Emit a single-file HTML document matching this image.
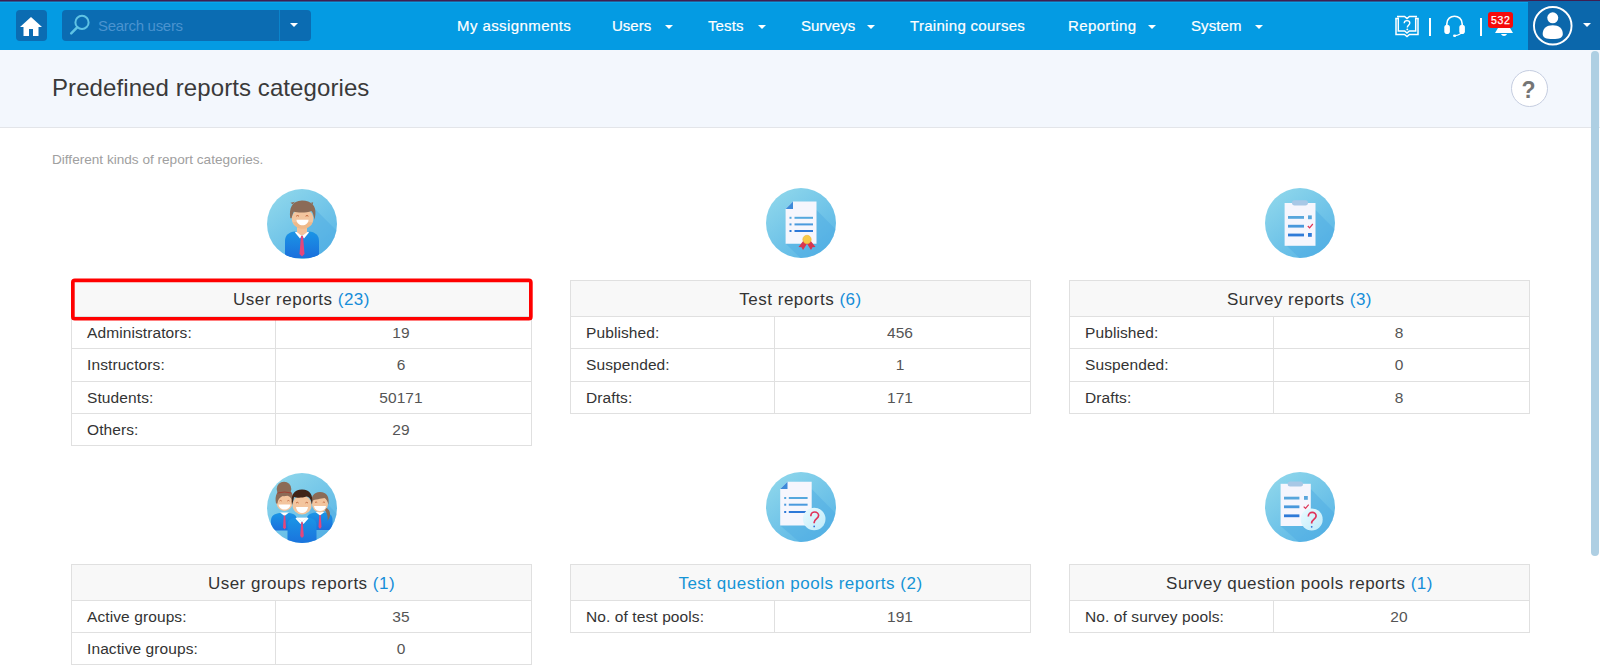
<!DOCTYPE html><html><head><meta charset="utf-8"><style>
*{box-sizing:border-box;margin:0;padding:0}
html,body{width:1600px;height:671px;overflow:hidden;background:#fff;font-family:"Liberation Sans",sans-serif;position:relative}
.a{position:absolute}
.nav{position:absolute;top:16px;color:#fff;font-size:15px;line-height:20px;white-space:nowrap;-webkit-text-stroke:0.2px currentColor}
.caret{position:absolute;top:25px;width:0;height:0;border-left:4px solid transparent;border-right:4px solid transparent;border-top:4px solid #fff}
.hl{position:absolute;height:1px;background:#e0e0e0}
.vl{position:absolute;width:1px;background:#e0e0e0}
.th{position:absolute;background:#f8f8f8;text-align:center;font-size:17px;color:#333;white-space:nowrap;letter-spacing:0.5px}
.th b{font-weight:normal;color:#158dd8}
.lb{position:absolute;font-size:15.5px;color:#333;white-space:nowrap;letter-spacing:0.1px}
.vv{position:absolute;font-size:15.5px;color:#555;white-space:nowrap;text-align:center;letter-spacing:0.1px}
</style></head><body>
<svg width="0" height="0" style="position:absolute"><defs>
<linearGradient id="gc" x1="0.15" y1="0.1" x2="0.8" y2="0.95">
<stop offset="0" stop-color="#8cd5eb"/><stop offset="1" stop-color="#5ab6e6"/></linearGradient>
<linearGradient id="gs" x1="0" y1="0" x2="1" y2="1">
<stop offset="0" stop-color="#4aa9e2"/><stop offset="1" stop-color="#5fb6e8" stop-opacity="0.6"/></linearGradient>
<linearGradient id="gb" x1="0" y1="0" x2="0" y2="1">
<stop offset="0" stop-color="#1b95e6"/><stop offset="1" stop-color="#1a6fdc"/></linearGradient>
<linearGradient id="gq" x1="0" y1="0" x2="1" y2="1">
<stop offset="0" stop-color="#e9fbff"/><stop offset="1" stop-color="#bfeaf9"/></linearGradient>
<clipPath id="cc"><circle cx="35" cy="35" r="35"/></clipPath>
</defs></svg>
<div class="a" style="left:0;top:0;width:1600px;height:50px;background:#049be3"></div>
<div class="a" style="left:0;top:0;width:1600px;height:1px;background:#3d1f52"></div>
<div class="a" style="left:0;top:1px;width:1600px;height:1px;background:#2b5c96"></div>
<div class="a" style="left:0;top:2px;width:1600px;height:1px;background:#06a6ee"></div>
<div class="a" style="left:16px;top:10px;width:31px;height:31px;background:#0b6cb2;border-radius:4px"></div>
<svg class="a" style="left:16px;top:10px" width="31" height="31" viewBox="0 0 31 31">
<path d="M15 7 L26 17 L22.5 17 L22.5 26 L17 26 L17 19 L13 19 L13 26 L7.5 26 L7.5 17 L4 17 Z" fill="#fff"/></svg>
<div class="a" style="left:62px;top:10px;width:249px;height:31px;background:#0b6cb2;border-radius:4px"></div>
<div class="a" style="left:279px;top:10px;width:1px;height:31px;background:#0a85cc"></div>
<svg class="a" style="left:62px;top:10px" width="30" height="31" viewBox="0 0 30 31">
<circle cx="20" cy="12.4" r="6.6" fill="none" stroke="#5fc3e4" stroke-width="2"/>
<line x1="15.2" y1="17.3" x2="9.2" y2="23.4" stroke="#5fc3e4" stroke-width="2.5" stroke-linecap="round"/></svg>
<div class="nav" style="left:98px;color:#4a93cf;letter-spacing:-0.3px;-webkit-text-stroke:0">Search users</div>
<div class="caret" style="left:290px;top:23px"></div>
<div class="nav" style="left:457px;letter-spacing:0.42px">My assignments</div>
<div class="nav" style="left:612px;letter-spacing:0px">Users</div>
<div class="caret" style="left:665px"></div>
<div class="nav" style="left:708px;letter-spacing:0.1px">Tests</div>
<div class="caret" style="left:758px"></div>
<div class="nav" style="left:801px;letter-spacing:0px">Surveys</div>
<div class="caret" style="left:867px"></div>
<div class="nav" style="left:910px;letter-spacing:0.3px">Training courses</div>
<div class="nav" style="left:1068px;letter-spacing:0.37px">Reporting</div>
<div class="caret" style="left:1148px"></div>
<div class="nav" style="left:1191px;letter-spacing:0.1px">System</div>
<div class="caret" style="left:1255px"></div>
<svg class="a" style="left:1380px;top:0" width="100" height="50" viewBox="1380 0 100 50">
<g fill="none" stroke="#fff" stroke-width="1.5" stroke-linejoin="miter">
<path d="M1398.3 17.5 L1398.3 31 L1404.7 31 L1407 33 L1409.3 31 L1415.7 31 L1415.7 17.5"/>
<path d="M1397 16.5 L1404.6 16.5 L1407 18.6 L1409.4 16.5 L1417 16.5"/>
<path d="M1396 18.5 L1396 34.5 L1404.5 34.5 L1407 36.6 L1409.5 34.5 L1418 34.5 L1418 18.5"/>
<path d="M1395.3 18.5 L1398.3 18.5 M1415.7 18.5 L1418.7 18.5"/>
</g>
<path d="M1404.2 23.3 C1404.2 21.3 1405.5 20.6 1407 20.6 C1408.6 20.6 1409.8 21.6 1409.8 23.1 C1409.8 25.2 1407.3 25.4 1407.3 27.5" fill="none" stroke="#fff" stroke-width="1.4"/>
<circle cx="1407.3" cy="29.4" r="0.95" fill="#fff"/>
<path d="M1446.8 26 L1446.8 24 C1446.8 13.6 1462.2 13.6 1462.2 24 L1462.2 26" fill="none" stroke="#fff" stroke-width="1.6"/>
<rect x="1444.3" y="24.8" width="5.6" height="9.3" rx="2.8" fill="#fff"/>
<rect x="1459.3" y="24.8" width="5.6" height="9.3" rx="2.8" fill="#fff"/>
<path d="M1461.5 32.5 C1460.5 34.2 1458.5 35.2 1455 35.6" fill="none" stroke="#fff" stroke-width="1.3"/>
<ellipse cx="1454.6" cy="35.7" rx="1.6" ry="1.2" fill="#fff"/>
</svg>
<div class="a" style="left:1429px;top:18px;width:2px;height:18px;background:#fff"></div>
<div class="a" style="left:1480px;top:18px;width:2px;height:18px;background:#fff"></div>
<svg class="a" style="left:1494px;top:26px" width="20" height="12" viewBox="0 0 20 12">
<path d="M4 2 L16 2 L19 7 L1 7 Z" fill="#fff"/><path d="M7 8 L13 8 C12 10.5 8 10.5 7 8Z" fill="#fff"/></svg>
<div class="a" style="left:1488px;top:12px;width:25px;height:16px;background:#f50a0a;border-radius:3px;color:#fff;font-size:10.5px;letter-spacing:0.7px;text-indent:0.7px;line-height:16px;-webkit-text-stroke:0.25px #fff;text-align:center">532</div>
<div class="a" style="left:1528px;top:1px;width:72px;height:49px;background:#0b67ab"></div>
<svg class="a" style="left:1532px;top:5px" width="42" height="42" viewBox="0 0 42 42">
<circle cx="20.75" cy="20.75" r="18.8" fill="none" stroke="#fff" stroke-width="1.9"/>
<circle cx="20.75" cy="12.8" r="5.5" fill="#fff"/>
<path d="M10.7 29 C10.7 23.5 14.5 20.2 20.75 20.2 C27 20.2 30.8 23.5 30.8 29 C30.8 32.6 27.5 34.1 20.75 34.1 C14 34.1 10.7 32.6 10.7 29Z" fill="#fff"/></svg>
<div class="caret" style="left:1583px;top:23px"></div>
<div class="a" style="left:0;top:50px;width:1600px;height:78px;background:#f3f7fd;border-bottom:1px solid #e3e5e9"></div>
<div class="a" style="left:52px;top:73px;font-size:24px;line-height:30px;color:#3a3a3a;white-space:nowrap;letter-spacing:0.09px">Predefined reports categories</div>
<div class="a" style="left:1511px;top:70px;width:37px;height:37px;border-radius:50%;background:#fff;border:1px solid #c5cde0;text-align:center;font-weight:bold;font-size:23px;line-height:38px;text-indent:-2px;color:#757575">?</div>
<div class="a" style="left:1591px;top:51px;width:8px;height:505px;background:#aecfe3;border-radius:4px"></div>
<div class="a" style="left:52px;top:152px;font-size:13.6px;line-height:16px;color:#a0a0a0;white-space:nowrap">Different kinds of report categories.</div>
<div class="th" style="left:72px;top:281px;width:459px;height:35px;line-height:37px;">User reports <b>(23)</b></div>
<div class="hl" style="left:71px;top:280px;width:461px"></div>
<div class="vl" style="left:71px;top:280px;height:166px"></div>
<div class="vl" style="left:531px;top:280px;height:166px"></div>
<div class="hl" style="left:71px;top:316px;width:461px"></div>
<div class="hl" style="left:71px;top:348px;width:461px"></div>
<div class="hl" style="left:71px;top:381px;width:461px"></div>
<div class="hl" style="left:71px;top:413px;width:461px"></div>
<div class="hl" style="left:71px;top:445px;width:461px"></div>
<div class="vl" style="left:275px;top:316px;height:129px"></div>
<div class="lb" style="left:87px;top:317px;line-height:31px">Administrators:</div>
<div class="vv" style="left:276px;top:317px;width:250px;line-height:31px">19</div>
<div class="lb" style="left:87px;top:349px;line-height:32px">Instructors:</div>
<div class="vv" style="left:276px;top:349px;width:250px;line-height:32px">6</div>
<div class="lb" style="left:87px;top:382px;line-height:31px">Students:</div>
<div class="vv" style="left:276px;top:382px;width:250px;line-height:31px">50171</div>
<div class="lb" style="left:87px;top:414px;line-height:31px">Others:</div>
<div class="vv" style="left:276px;top:414px;width:250px;line-height:31px">29</div>
<div class="th" style="left:571px;top:281px;width:459px;height:35px;line-height:37px;">Test reports <b>(6)</b></div>
<div class="hl" style="left:570px;top:280px;width:461px"></div>
<div class="vl" style="left:570px;top:280px;height:134px"></div>
<div class="vl" style="left:1030px;top:280px;height:134px"></div>
<div class="hl" style="left:570px;top:316px;width:461px"></div>
<div class="hl" style="left:570px;top:348px;width:461px"></div>
<div class="hl" style="left:570px;top:381px;width:461px"></div>
<div class="hl" style="left:570px;top:413px;width:461px"></div>
<div class="vl" style="left:774px;top:316px;height:97px"></div>
<div class="lb" style="left:586px;top:317px;line-height:31px">Published:</div>
<div class="vv" style="left:775px;top:317px;width:250px;line-height:31px">456</div>
<div class="lb" style="left:586px;top:349px;line-height:32px">Suspended:</div>
<div class="vv" style="left:775px;top:349px;width:250px;line-height:32px">1</div>
<div class="lb" style="left:586px;top:382px;line-height:31px">Drafts:</div>
<div class="vv" style="left:775px;top:382px;width:250px;line-height:31px">171</div>
<div class="th" style="left:1070px;top:281px;width:459px;height:35px;line-height:37px;">Survey reports <b>(3)</b></div>
<div class="hl" style="left:1069px;top:280px;width:461px"></div>
<div class="vl" style="left:1069px;top:280px;height:134px"></div>
<div class="vl" style="left:1529px;top:280px;height:134px"></div>
<div class="hl" style="left:1069px;top:316px;width:461px"></div>
<div class="hl" style="left:1069px;top:348px;width:461px"></div>
<div class="hl" style="left:1069px;top:381px;width:461px"></div>
<div class="hl" style="left:1069px;top:413px;width:461px"></div>
<div class="vl" style="left:1273px;top:316px;height:97px"></div>
<div class="lb" style="left:1085px;top:317px;line-height:31px">Published:</div>
<div class="vv" style="left:1274px;top:317px;width:250px;line-height:31px">8</div>
<div class="lb" style="left:1085px;top:349px;line-height:32px">Suspended:</div>
<div class="vv" style="left:1274px;top:349px;width:250px;line-height:32px">0</div>
<div class="lb" style="left:1085px;top:382px;line-height:31px">Drafts:</div>
<div class="vv" style="left:1274px;top:382px;width:250px;line-height:31px">8</div>
<div class="th" style="left:72px;top:565px;width:459px;height:35px;line-height:37px;">User groups reports <b>(1)</b></div>
<div class="hl" style="left:71px;top:564px;width:461px"></div>
<div class="vl" style="left:71px;top:564px;height:101px"></div>
<div class="vl" style="left:531px;top:564px;height:101px"></div>
<div class="hl" style="left:71px;top:600px;width:461px"></div>
<div class="hl" style="left:71px;top:632px;width:461px"></div>
<div class="hl" style="left:71px;top:664px;width:461px"></div>
<div class="vl" style="left:275px;top:600px;height:64px"></div>
<div class="lb" style="left:87px;top:601px;line-height:31px">Active groups:</div>
<div class="vv" style="left:276px;top:601px;width:250px;line-height:31px">35</div>
<div class="lb" style="left:87px;top:633px;line-height:31px">Inactive groups:</div>
<div class="vv" style="left:276px;top:633px;width:250px;line-height:31px">0</div>
<div class="th" style="left:571px;top:565px;width:459px;height:35px;line-height:37px;color:#1594d6">Test question pools reports (2)</div>
<div class="hl" style="left:570px;top:564px;width:461px"></div>
<div class="vl" style="left:570px;top:564px;height:69px"></div>
<div class="vl" style="left:1030px;top:564px;height:69px"></div>
<div class="hl" style="left:570px;top:600px;width:461px"></div>
<div class="hl" style="left:570px;top:632px;width:461px"></div>
<div class="vl" style="left:774px;top:600px;height:32px"></div>
<div class="lb" style="left:586px;top:601px;line-height:31px">No. of test pools:</div>
<div class="vv" style="left:775px;top:601px;width:250px;line-height:31px">191</div>
<div class="th" style="left:1070px;top:565px;width:459px;height:35px;line-height:37px;">Survey question pools reports <b>(1)</b></div>
<div class="hl" style="left:1069px;top:564px;width:461px"></div>
<div class="vl" style="left:1069px;top:564px;height:69px"></div>
<div class="vl" style="left:1529px;top:564px;height:69px"></div>
<div class="hl" style="left:1069px;top:600px;width:461px"></div>
<div class="hl" style="left:1069px;top:632px;width:461px"></div>
<div class="vl" style="left:1273px;top:600px;height:32px"></div>
<div class="lb" style="left:1085px;top:601px;line-height:31px">No. of survey pools:</div>
<div class="vv" style="left:1274px;top:601px;width:250px;line-height:31px">20</div>
<svg class="a" style="left:60px;top:270px" width="490" height="60" viewBox="60 270 490 60"><rect x="72.85" y="280.45" width="458" height="38.3" rx="2" fill="none" stroke="#f00" stroke-width="3.7"/></svg>
<div class="a" style="left:267px;top:189px;width:70px;height:70px"><svg width="70" height="70" viewBox="0 0 70 70"><circle cx="35" cy="35" r="35" fill="url(#gc)"/><g clip-path="url(#cc)">
<path d="M48 20 L80 52 L80 80 L45 80 L30 62 Z" fill="#4eaae3" opacity="0.45"/>
<path d="M18 69 L18 52 C18 46 22 43 28 42.5 L42 42.5 C48 43 52 46 52 52 L52 69 Z" fill="url(#gb)"/>
<path d="M30 38 L40 38 L40 44 L35 47 L30 44 Z" fill="#f2c29c"/>
<path d="M29 42.5 L35 47 L33 49.5 L28 43.5 Z" fill="#fff"/>
<path d="M41 42.5 L35 47 L37 49.5 L42 43.5 Z" fill="#fff"/>
<path d="M34 47 L36 47 L37.5 65 L35 67.5 L32.5 65 Z" fill="#e5467b"/>
<g transform="translate(0,1.2)"><ellipse cx="35.6" cy="28.6" rx="10.8" ry="10" fill="#f3c59e"/>
<path d="M26 32 C28 37 32 38.6 35.6 38.6 C39.5 38.6 43.5 37 45.5 32 Z" fill="#eeb585" opacity="0.8"/>
<path d="M23.3 28 C21.8 18 25 10.6 35 10.4 C44.5 10.4 49.2 16 48.4 24 L47.6 29.5 C46.6 25.5 46.2 22.5 44.3 20.8 C40 22.8 30.5 22.6 26.8 21.6 C25.8 23.5 25.2 25.5 24.6 28 Z" fill="#8b6b57"/>
<path d="M25.5 14 L23.5 12.5 L28 11.6 Z M44 12.5 L46.2 12 L45.6 14.5 Z" fill="#8b6b57"/>
<path d="M29.2 26 Q30.6 24.6 32 26 M38.6 26 Q40 24.6 41.4 26" stroke="#c0643a" stroke-width="1" fill="none"/>
<path d="M29.5 29.5 L41.5 29.5 C41.5 33 38.5 35 35.5 35 C32.5 35 29.5 33 29.5 29.5 Z" fill="#fff"/>
</g></g></svg></div>
<div class="a" style="left:766px;top:188px;width:70px;height:70px"><svg width="70" height="70" viewBox="0 0 70 70"><circle cx="35" cy="35" r="35" fill="url(#gc)"/><g clip-path="url(#cc)">
<path d="M50.5 22 L80 52 L80 80 L45 80 L20 56 Z" fill="#4eaae3" opacity="0.45"/>
<path d="M27 13.5 L50.5 13.5 L50.5 55.8 L19.6 55.8 L19.6 21 Z" fill="#f6f6fd"/>
<path d="M27 13.5 L27 21 L19.6 21 Z" fill="#3e8ad9"/>
<rect x="23.5" y="28.8" width="2" height="2" fill="#55a8de"/><rect x="28.5" y="28.8" width="18.5" height="2" fill="#55a8de"/>
<rect x="23.5" y="35.4" width="2" height="2" fill="#4a9ade"/><rect x="28.5" y="35.4" width="18.5" height="2" fill="#4a9ade"/>
<rect x="23.5" y="42" width="2" height="2" fill="#2d78d8"/><rect x="28.5" y="42" width="18.5" height="2" fill="#2d78d8"/>
<path d="M38 52 L32.5 59 L35.5 59.2 L37 62 L41.5 55 Z" fill="#d8354f"/>
<path d="M44 52 L49.5 59 L46.5 59.2 L45 62 L40.5 55 Z" fill="#d8354f"/>
<circle cx="41" cy="51.5" r="4.2" fill="#f7c948" stroke="#f0b63a" stroke-width="0.6"/>
</g></svg></div>
<div class="a" style="left:1265px;top:188px;width:70px;height:70px"><svg width="70" height="70" viewBox="0 0 70 70"><circle cx="35" cy="35" r="35" fill="url(#gc)"/><g clip-path="url(#cc)">
<path d="M50.5 22 L80 52 L80 80 L45 80 L22 58 Z" fill="#4eaae3" opacity="0.45"/>
<rect x="19.6" y="15" width="30.9" height="42.8" fill="#f6f6fd"/>
<rect x="27" y="12.2" width="16" height="5.2" rx="2.6" fill="#a8c8e6"/>
<rect x="23" y="28" width="16" height="2.8" fill="#58a6dc"/>
<rect x="43" y="27.4" width="3.8" height="3.8" fill="#5aa6dc"/>
<rect x="23" y="36.8" width="16" height="2.8" fill="#4998dc"/>
<path d="M42.8 38 L44.6 39.8 L47.8 36" stroke="#de3356" stroke-width="1.2" fill="none"/>
<rect x="23" y="45.6" width="16" height="2.8" fill="#2f7ad8"/>
<rect x="43" y="45" width="3.8" height="3.8" fill="#2f7ad8"/>
</g></svg></div>
<div class="a" style="left:267px;top:473px;width:70px;height:70px"><svg width="70" height="70" viewBox="0 0 70 70"><circle cx="35" cy="35" r="35" fill="url(#gc)"/><g clip-path="url(#cc)">
<path d="M52 22 L80 52 L80 80 L45 80 L30 62 Z" fill="#4eaae3" opacity="0.42"/>
<g transform="translate(0,-4.5)">
<path d="M4 62 L4 52 C4 47 8 45 13 44.5 L22 44.5 C27 45 30 47 30 52 L30 62 Z" fill="url(#gb)"/>
<path d="M13 44 L22 44 L17.5 47.5 Z" fill="#fff"/>
<path d="M16.8 47 L18.2 47 L19 59 L17.5 61 L16 59 Z" fill="#e5467b"/>
<ellipse cx="17.5" cy="34" rx="8" ry="8.5" fill="#f3c59e"/>
<path d="M9 35 C7.5 27 10 21 17.5 21 C25 21 27 27 26 33 C24 28 20 26 17 27 C14 28 11 30 10.5 35 Z" fill="#8b6b57"/>
<circle cx="17" cy="20.5" r="7.3" fill="#8b6b57"/>
<path d="M10.5 24.5 Q17.5 22.5 24.5 24.5" stroke="#a33b2e" stroke-width="0.9" fill="none"/>
<path d="M11.5 36 L23.5 36 C23 39.5 20.5 41 17.5 41 C14.5 41 12 39.5 11.5 36 Z" fill="#fff"/>
<path d="M12.5 32.5 Q13.6 31.4 14.7 32.5 M20.3 32.5 Q21.4 31.4 22.5 32.5" stroke="#c0643a" stroke-width="0.8" fill="none"/>
</g><g transform="translate(-0.5,-5)">
<path d="M40 62 L40 52 C40 47 44 45 49 44.5 L58 44.5 C63 45 66 47 66 52 L66 62 Z" fill="url(#gb)"/>
<path d="M49 44 L58 44 L53.5 47.5 Z" fill="#fff"/>
<path d="M52.8 47 L54.2 47 L55 59 L53.5 61 L52 59 Z" fill="#e5467b"/>
<ellipse cx="53.5" cy="36" rx="8" ry="8.5" fill="#f3c59e"/>
<path d="M45 37 C44 29 47 24 53.5 24 C60.5 24 63 29 62 37 C61 33 60 31 58 30 C55 31 48 31 46 33 Z" fill="#8b6b57"/>
<path d="M60 40 C64 42 65 48 61 53 C62 48 59.5 44 58.5 42 Z" fill="#8b6b57"/>
<path d="M47.5 38 L59.5 38 C59 41.5 56.5 43 53.5 43 C50.5 43 48 41.5 47.5 38 Z" fill="#fff"/>
<path d="M48.5 34.5 Q49.6 33.4 50.7 34.5 M56.3 34.5 Q57.4 33.4 58.5 34.5" stroke="#c0643a" stroke-width="0.8" fill="none"/>
</g><g transform="translate(-0.5,-7)">
<path d="M21 80 L21 59 C21 54 25 52 30 51.5 L41 51.5 C46 52 50 54 50 59 L50 80 Z" fill="url(#gb)"/>
<path d="M30 51.5 L41 51.5 L35.5 56 Z" fill="#fff"/>
<path d="M30.5 51.5 L35.5 56 L34 58 L29 52.5 Z M40.5 51.5 L35.5 56 L37 58 L42 52.5 Z" fill="#fff"/>
<path d="M34.8 56 L36.2 56 L37.3 70 L35.5 72 L33.7 70 Z" fill="#e5467b"/>
<ellipse cx="35.5" cy="39" rx="9.5" ry="9.5" fill="#f3c59e"/>
<path d="M25.5 39 C24 29 27.5 23.5 35.5 23.5 C43.5 23.5 47 29 45.5 38.5 C44.5 33 43 31 40 30.5 C36 32 30 32 27.5 31 C27 34 26.5 36 25.5 39 Z" fill="#3f2418"/>
<path d="M29.5 41 L41.5 41 C41 45 38.5 47 35.5 47 C32.5 47 30 45 29.5 41 Z" fill="#fff"/>
<path d="M29.5 37 Q30.8 35.6 32.1 37 M38.9 37 Q40.2 35.6 41.5 37" stroke="#c0643a" stroke-width="0.9" fill="none"/>
</g></g></svg></div>
<div class="a" style="left:766px;top:472px;width:70px;height:70px"><svg width="70" height="70" viewBox="0 0 70 70"><circle cx="35" cy="35" r="35" fill="url(#gc)"/><g clip-path="url(#cc)">
<path d="M45.7 17 L80 52 L80 80 L45 80 L14.2 53.4 Z" fill="#4eaae3" opacity="0.45"/>
<path d="M21.5 9.8 L45.7 9.8 L45.7 53.4 L14.2 53.4 L14.2 17 Z" fill="#f6f6fd"/>
<path d="M21.5 9.8 L21.5 17 L14.2 17 Z" fill="#3e8ad9"/>
<rect x="18.2" y="25" width="2" height="2" fill="#55a8de"/><rect x="22.8" y="25" width="18.8" height="2" fill="#55a8de"/>
<rect x="18.2" y="31.7" width="2" height="2" fill="#4a9ade"/><rect x="22.8" y="31.7" width="18.8" height="2" fill="#4a9ade"/>
<rect x="18.2" y="39" width="2" height="2" fill="#2d78d8"/><rect x="22.8" y="39" width="18.8" height="2" fill="#2d78d8"/>
<circle cx="48.2" cy="47" r="11.3" fill="url(#gq)"/>
<path d="M44.8 44.2 C44.8 41.2 47 40 48.7 40 C50.8 40 52.6 41.5 52.6 43.6 C52.6 46.6 48.2 47.2 48.2 50.2 L48.2 51.2" stroke="#e0335a" stroke-width="1.7" fill="none"/>
<circle cx="48.2" cy="54.4" r="0.9" fill="#2a6fd6"/>
</g></svg></div>
<div class="a" style="left:1265px;top:472px;width:70px;height:70px"><svg width="70" height="70" viewBox="0 0 70 70"><circle cx="35" cy="35" r="35" fill="url(#gc)"/><g clip-path="url(#cc)">
<path d="M45.8 17 L80 52 L80 80 L45 80 L15.6 54 Z" fill="#4eaae3" opacity="0.45"/>
<rect x="15.6" y="11.8" width="30.2" height="42.2" fill="#f6f6fd"/>
<rect x="22.7" y="9.6" width="15.3" height="5" rx="2.5" fill="#a8c8e6"/>
<rect x="19" y="24.7" width="15.4" height="2.8" fill="#58a6dc"/>
<rect x="39" y="24" width="3.8" height="3.8" fill="#5aa6dc"/>
<rect x="19" y="33.4" width="15.4" height="2.8" fill="#4998dc"/>
<path d="M38.7 34.6 L40.5 36.4 L43.7 32.6" stroke="#de3356" stroke-width="1.2" fill="none"/>
<rect x="19" y="42.4" width="15.4" height="2.8" fill="#2f7ad8"/>
<circle cx="46.7" cy="47.4" r="11" fill="url(#gq)"/>
<path d="M43.3 44.6 C43.3 41.6 45.5 40.4 47.2 40.4 C49.3 40.4 51.1 41.9 51.1 44 C51.1 47 46.7 47.6 46.7 50.6 L46.7 51.6" stroke="#e0335a" stroke-width="1.7" fill="none"/>
<circle cx="46.7" cy="54.8" r="0.9" fill="#2a6fd6"/>
</g></svg></div>
</body></html>
